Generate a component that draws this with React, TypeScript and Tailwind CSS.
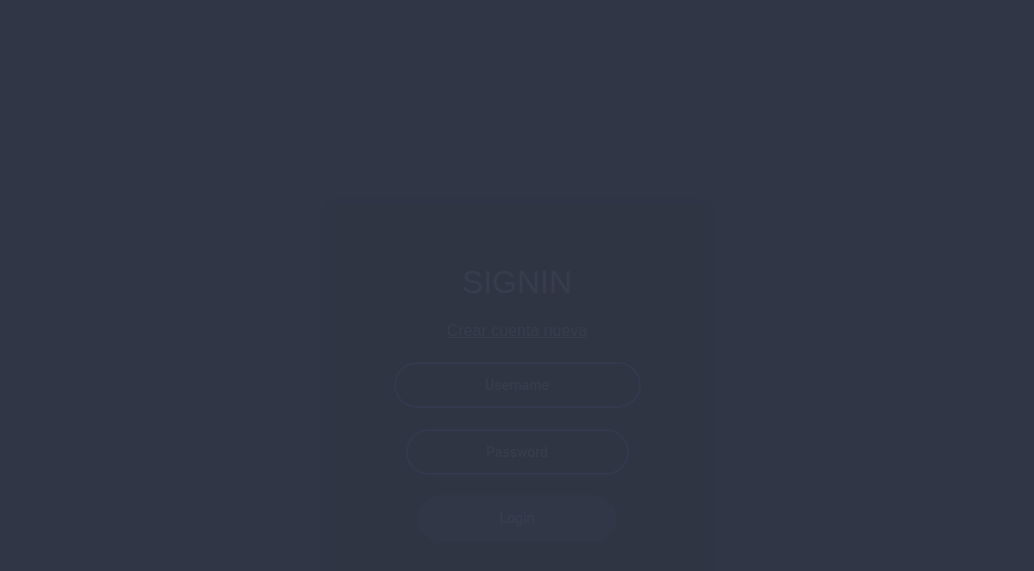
import React from "react";

export default function App() {
  return (
    <div className="min-h-screen w-full bg-[#303645] flex justify-center pt-[205px] overflow-hidden" style={{ height: 571 }}>
      <div className="w-[380px] h-[420px] bg-[#2f3542] shadow-[0_0_10px_rgba(0,0,0,0.04)] flex flex-col items-center pt-[59px]">
        <h1 className="text-[32px] leading-[37px] text-[#373d4d] font-['Liberation_Sans',Arial,sans-serif]">SIGNIN</h1>
        <a href="#" className="mt-[21px] text-[16px] leading-[18px] text-[#373d4d] underline font-['Liberation_Sans',Arial,sans-serif]">Crear cuenta nueva</a>
        <input
          className="mt-[22px] w-[247px] h-[46px] rounded-full border-2 border-[#343a4d] bg-transparent text-center text-[14px] font-medium text-[#373d4d] placeholder:text-[#373d4d] outline-none font-['Roboto',sans-serif]"
          placeholder="Username"
        />
        <input
          type="password"
          className="mt-[21px] w-[223px] h-[46px] rounded-full border-2 border-[#343a4d] bg-transparent text-center text-[14px] font-medium text-[#373d4d] placeholder:text-[#373d4d] outline-none font-['Roboto',sans-serif]"
          placeholder="Password"
        />
        <button className="mt-[20px] w-[200px] h-[47px] rounded-full bg-[#323748] text-[14px] font-medium text-[#373d4d] font-['Roboto',sans-serif]">
          Login
        </button>
      </div>
    </div>
  );
}
